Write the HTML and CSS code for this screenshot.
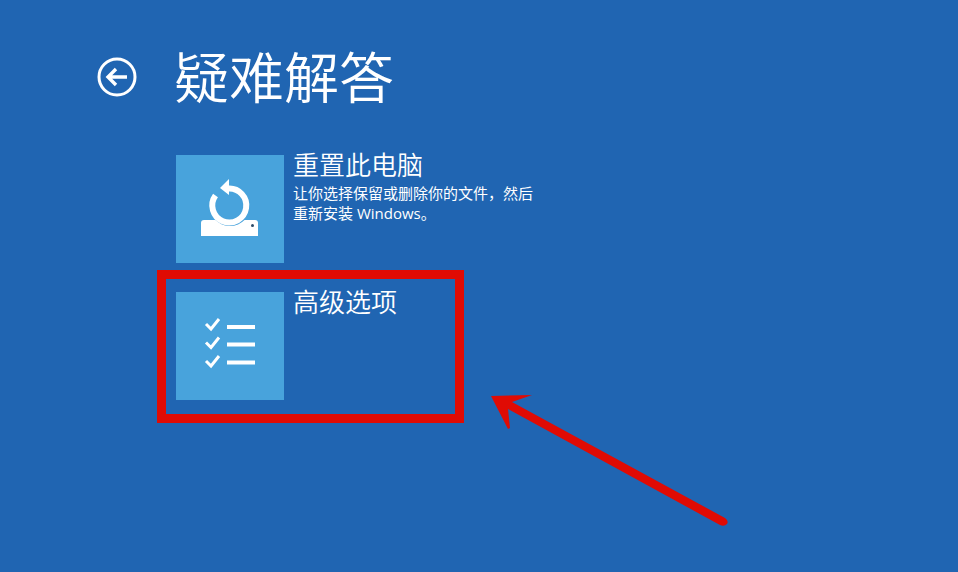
FILE: index.html
```
<!DOCTYPE html>
<html lang="zh-CN">
<head>
  <meta charset="UTF-8">
  <meta name="viewport" content="width=device-width, initial-scale=1">
  <title>疑难解答</title>
  <link rel="stylesheet" href="styles.css">
</head>
<body>
  <main class="screen">
    <header class="header">
      <button class="back-btn" type="button" aria-label="返回">
        <svg viewBox="0 0 40 40" fill="none" stroke="currentColor">
          <circle cx="20" cy="20" r="18" stroke-width="3"/>
          <path d="M30 20H12M19 12l-8 8 8 8" stroke-width="3.4"/>
        </svg>
      </button>
      <h1>疑难解答</h1>
    </header>

    <div class="options">
      <button class="option" type="button">
        <span class="tile">
          <svg viewBox="0 0 108 108">
            <path d="M28 65h51q3 0 3 3v13H25V68q0-3 3-3z" fill="#fff"/>
            <circle cx="54" cy="50" r="21" fill="#48a3dc"/>
            <path d="M52 33.500A17 17 0 1 1 39.500 40.500" fill="none" stroke="#fff" stroke-width="6"/>
            <path d="M44 33l9-9v16z" fill="#fff"/>
            <circle cx="76.500" cy="70.500" r="1.500" fill="#2b4a68"/>
          </svg>
        </span>
        <span class="option-text">
          <span class="option-title">重置此电脑</span>
          <span class="option-desc">让你选择保留或删除你的文件，然后<br>重新安装 Windows。</span>
        </span>
      </button>

      <div class="marked">
        <button class="option" type="button">
          <span class="tile">
            <svg viewBox="0 0 108 108" fill="none" stroke="#fff">
              <path d="M30 32l5 5 8-10M30 50.500l5 5 8-10M30 69l5 5 8-10" stroke-width="3"/>
              <path d="M51 35h28M51 52.500h28M51 70.500h28" stroke-width="4"/>
            </svg>
          </span>
          <span class="option-text">
            <span class="option-title">高级选项</span>
          </span>
        </button>
        <span class="mark-box"></span>
        <svg class="mark-arrow" viewBox="0 0 240 132" fill="#e00b04">
          <path d="M1 2l41-1-20 7L235 124q4 3 2 6-3 3-7 1L18 15l2 19-2 1z"/>
        </svg>
      </div>
    </div>
  </main>
</body>
</html>
```
FILE: styles.css
```
* {
  box-sizing: border-box;
}

body {
  margin: 0;
  min-height: 100vh;
  background-color: #2065b2;
  color: #fff;
  font-family: "Open Sans", "Noto Sans CJK SC", sans-serif;
}

button {
  padding: 0;
  border: none;
  background: none;
  color: inherit;
  font-family: inherit;
  text-align: left;
  cursor: pointer;
}

.screen {
  padding: 37px 24px 38px 97px;
}

.header {
  display: flex;
  align-items: center;
  gap: 37px;
  margin-bottom: 38px;
}

.header h1 {
  margin: 0;
  font-size: 55px;
  font-weight: 350;
  line-height: 80px;
}

.back-btn {
  width: 40px;
  height: 40px;
}

.back-btn svg,
.tile svg {
  display: block;
  width: 100%;
}

/* Option list */
.options {
  display: flex;
  flex-direction: column;
  align-items: flex-start;
  gap: 29px;
  padding-left: 79px;
}

.option {
  display: flex;
  align-items: flex-start;
  gap: 9px;
}

.tile {
  flex: none;
  width: 108px;
  height: 108px;
  background-color: #48a3dc;
}

.option-text {
  display: flex;
  flex-direction: column;
}

.option-title {
  font-size: 26px;
  font-weight: 350;
  line-height: 20px;
  margin-bottom: 8px;
}

.option-desc {
  font-size: 15px;
  line-height: 20px;
}

/* Red highlight over the advanced options entry */
.marked {
  position: relative;
}

.mark-box {
  position: absolute;
  top: -22px;
  left: -19px;
  width: 307px;
  height: 153px;
  border: 9px solid #e00b04;
  pointer-events: none;
}

.mark-arrow {
  position: absolute;
  top: 102px;
  left: 314px;
  width: 240px;
  height: 132px;
  pointer-events: none;
}
```
